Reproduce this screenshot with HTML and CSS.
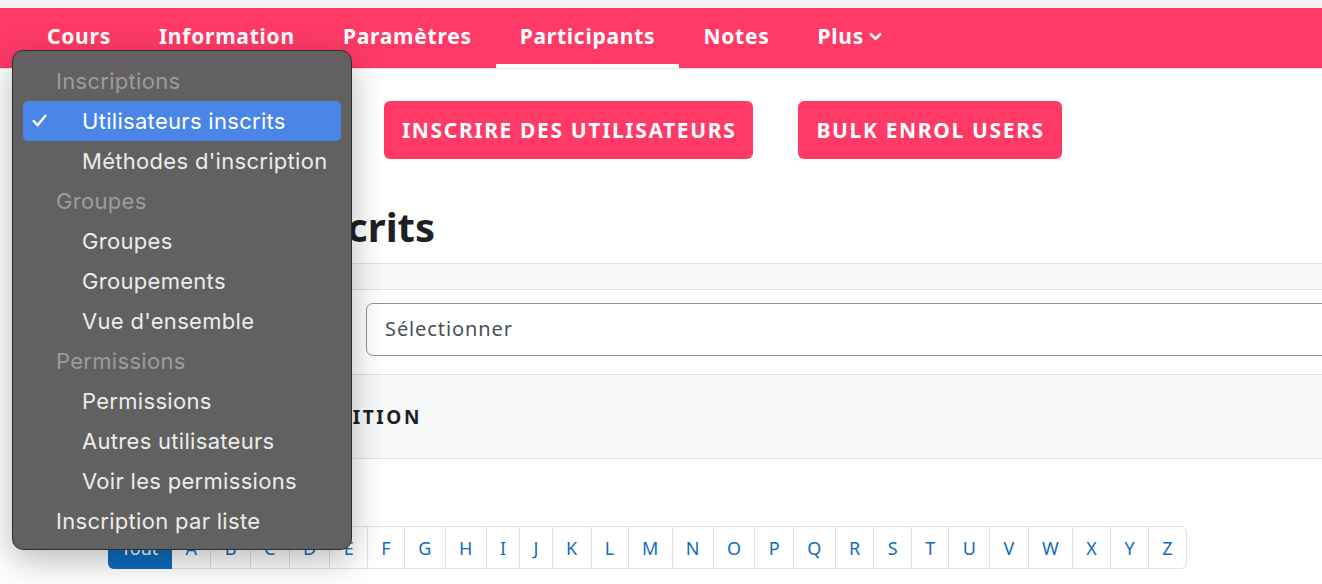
FILE: index.html
```html
<!DOCTYPE html>
<html lang="fr">
<head>
    <meta charset="UTF-8">
    <meta name="viewport" content="width=device-width, initial-scale=1.0">
    <title>Participants</title>
    <link rel="stylesheet" href="styles.css">
</head>
<body>
    <div class="top-strip"></div>

    <!-- Course secondary navigation -->
    <nav class="course-nav">
        <a class="nav-item" href="#">Cours</a>
        <a class="nav-item" href="#">Information</a>
        <a class="nav-item" href="#">Paramètres</a>
        <a class="nav-item active" href="#">Participants</a>
        <a class="nav-item" href="#">Notes</a>
        <a class="nav-item" href="#">Plus
            <svg class="chevron" viewBox="0 0 16 16" width="15" height="15"><polyline points="3,5.5 8,10.5 13,5.5" fill="none" stroke="#fff" stroke-width="2.8" stroke-linecap="round" stroke-linejoin="round"/></svg>
        </a>
    </nav>

    <main class="page">
        <div class="actions">
            <div class="tertiary-select">Utilisateurs inscrits</div>
            <button class="btn-primary">Inscrire des utilisateurs</button>
            <button class="btn-primary">Bulk enrol users</button>
        </div>

        <h2 class="page-title">Utilisateurs inscrits</h2>

        <section class="filters">
            <div class="filter-head"></div>
            <div class="filter-row">
                <span class="filter-label">Correspond</span>
                <div class="filter-input">Sélectionner</div>
            </div>
            <div class="filter-foot">
                <span class="add-condition">Ajouter une condition</span>
            </div>
        </section>

        <div class="initials-row">
            <span class="initials-label">Prénom</span>
            <div class="initials">
                <span class="initial current">Tout</span>
                <span class="initial">A</span><span class="initial">B</span><span class="initial">C</span>
                <span class="initial">D</span><span class="initial">E</span><span class="initial">F</span>
                <span class="initial">G</span><span class="initial">H</span><span class="initial">I</span>
                <span class="initial">J</span><span class="initial">K</span><span class="initial">L</span>
                <span class="initial">M</span><span class="initial">N</span><span class="initial">O</span>
                <span class="initial">P</span><span class="initial">Q</span><span class="initial">R</span>
                <span class="initial">S</span><span class="initial">T</span><span class="initial">U</span>
                <span class="initial">V</span><span class="initial">W</span><span class="initial">X</span>
                <span class="initial">Y</span><span class="initial">Z</span>
            </div>
        </div>
    </main>

    <!-- Open native select menu -->
    <div class="select-menu">
        <div class="menu-group">Inscriptions</div>
        <div class="menu-option selected">
            <svg class="check" viewBox="0 0 16 16" width="17" height="17"><polyline points="2.5,8.5 6.2,12.5 13.5,3.5" fill="none" stroke="#fff" stroke-width="2.3" stroke-linecap="round" stroke-linejoin="round"/></svg>
            Utilisateurs inscrits
        </div>
        <div class="menu-option">Méthodes d'inscription</div>
        <div class="menu-group">Groupes</div>
        <div class="menu-option">Groupes</div>
        <div class="menu-option">Groupements</div>
        <div class="menu-option">Vue d'ensemble</div>
        <div class="menu-group">Permissions</div>
        <div class="menu-option">Permissions</div>
        <div class="menu-option">Autres utilisateurs</div>
        <div class="menu-option">Voir les permissions</div>
        <div class="menu-option top-level">Inscription par liste</div>
    </div>
</body>
</html>
```

FILE: styles.css
```css
body {
    margin: 0;
    font-family: 'Noto Sans', sans-serif;
    color: #1d2125;
    background: #fff;
    overflow: hidden;
}

.top-strip {
    height: 8px;
    background: #f2f2f4;
}

.course-nav {
    display: flex;
    height: 60px;
    padding-left: 23px;
    background: #ff3a67;
    border-bottom: 1px solid #e8e8ea;
}

.nav-item {
    display: flex;
    align-items: center;
    padding: 0 24px;
    color: #fff;
    font-size: 21px;
    letter-spacing: 0.75px;
    font-weight: bold;
    text-decoration: none;
    border-bottom: 4px solid transparent;
}

.nav-item.active {
    border-bottom-color: #fff;
}

.chevron {
    margin-left: 4px;
}

.page {
    padding-left: 46px;
    width: 1400px;
}

.actions {
    display: flex;
    gap: 45px;
    margin-top: 32px;
    height: 58px;
}

.tertiary-select {
    width: 293px;
    border: 1px solid #8f959e;
    border-radius: 6px;
    box-sizing: border-box;
    padding: 0 16px;
    line-height: 56px;
    font-size: 19px;
}

.btn-primary {
    font-family: inherit;
    font-size: 21px;
    letter-spacing: 1.65px;
    font-weight: bold;
    text-transform: uppercase;
    color: #fff;
    background: #ff3a67;
    border: none;
    border-radius: 6px;
    padding: 0 17px 0 18px;
}

.page-title {
    font-size: 40px;
    line-height: 48px;
    font-weight: bold;
    margin: 44px 0 12px;
}

.filters {
    border-top: 1px solid #dee2e6;
    border-bottom: 1px solid #dee2e6;
}

.filter-head {
    height: 25px;
    background: #f8f9fa;
    border-bottom: 1px solid #dee2e6;
}

.filter-row {
    display: grid;
    grid-template-columns: 304px 1fr;
    padding: 13px 0 18px 16px;
    border-bottom: 1px solid #dee2e6;
}

.filter-label {
    align-self: center;
}

.filter-input {
    height: 53px;
    box-sizing: border-box;
    border: 1.5px solid #8f959e;
    border-radius: 7px;
    padding: 0 18px;
    line-height: 50px;
    font-size: 20px;
    letter-spacing: 0.9px;
    color: #495057;
}

.filter-foot {
    height: 83px;
    display: flex;
    align-items: center;
    background: #f8f9fa;
    padding-left: 16px;
}

.add-condition {
    width: 360px;
    text-align: right;
    font-size: 19px;
    letter-spacing: 2.6px;
    font-weight: bold;
    text-transform: uppercase;
}

.initials-row {
    display: flex;
    margin-top: 67px;
}

.initials-label {
    width: 62px;
    font-size: 16px;
    line-height: 20px;
}

.initials {
    display: flex;
    height: 43px;
}

.initial {
    display: flex;
    align-items: center;
    padding: 0 13.3px;
    font-size: 18px;
    color: #0f6cbf;
    border: 1px solid #dee2e6;
    border-left: none;
}

.initial.current {
    background: #0f6cbf;
    border-color: #0f6cbf;
    color: #fff;
    border-radius: 6px 0 0 6px;
    padding: 0 13px;
}

.initial:last-child {
    border-radius: 0 6px 6px 0;
}

/* native dropdown drawn over the page */
.select-menu {
    position: absolute;
    left: 12px;
    top: 50px;
    width: 340px;
    height: 500px;
    box-sizing: border-box;
    padding: 10px 10px;
    background: linear-gradient(#675d61 0, #636063 18px, #616161 40px);
    border: 1px solid #2e2e2e;
    border-radius: 11px;
    box-shadow: 0 10px 34px rgba(0, 0, 0, 0.28);
    font-family: 'Inter', sans-serif;
    font-size: 22px;
    letter-spacing: 0.3px;
}

.menu-group,
.menu-option {
    height: 40px;
    line-height: 40px;
    white-space: nowrap;
}

.menu-group {
    padding-left: 33px;
    color: #9c9c9c;
}

.menu-option {
    position: relative;
    padding-left: 59px;
    color: #ececec;
    border-radius: 5px;
}

.menu-option.top-level {
    padding-left: 33px;
}

.menu-option.selected {
    background: #4a86e8;
    color: #fff;
}

.check {
    position: absolute;
    left: 8px;
    top: 11px;
}
```
